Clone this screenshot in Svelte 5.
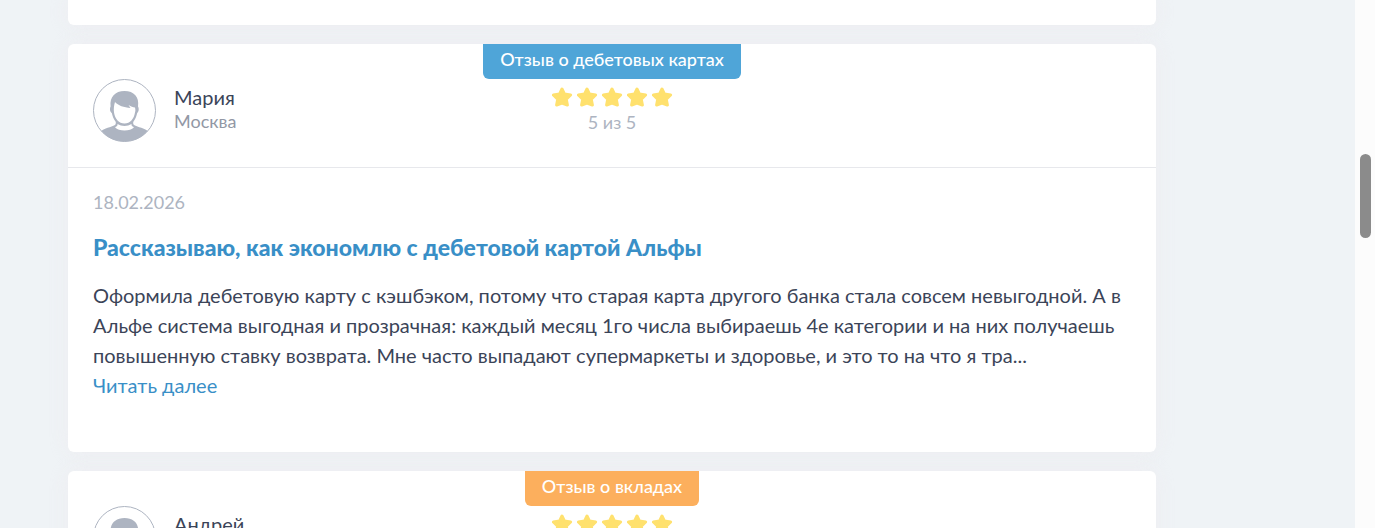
<script lang="ts">
  type Review = {
    id: number;
    kind: "debit" | "deposit";
    badge: string;
    author: string;
    city: string;
    rating: number;
    date: string;
    title: string;
    text: string;
  };

  const reviews: Review[] = [
    {
      id: 1,
      kind: "debit",
      badge: "Отзыв о дебетовых картах",
      author: "Мария",
      city: "Москва",
      rating: 5,
      date: "18.02.2026",
      title: "Рассказываю, как экономлю с дебетовой картой Альфы",
      text: "Оформила дебетовую карту с кэшбэком, потому что старая карта другого банка стала совсем невыгодной. А в Альфе система выгодная и прозрачная: каждый месяц 1го числа выбираешь 4е категории и на них получаешь повышенную ставку возврата. Мне часто выпадают супермаркеты и здоровье, и это то на что я тра...",
    },
    {
      id: 2,
      kind: "deposit",
      badge: "Отзыв о вкладах",
      author: "Андрей",
      city: "",
      rating: 5,
      date: "",
      title: "",
      text: "",
    },
  ];
</script>

<div class="page">
  <main class="reviews">
    <div class="card card-tail"></div>

    {#each reviews as review (review.id)}
      <article class="card">
        <header class="card-header">
          <div class="author">
            <svg class="avatar" viewBox="0 0 63 63" aria-hidden="true">
              <circle cx="31.5" cy="31.5" r="31" fill="#fff" stroke="#adb4c1" />
              <path
                fill="#adb4c1"
                d="M8.5 52C11 49 18 48.500 22 46C23 45.300 23 43.500 22.500 42.500C20.500 40 19.500 37 18.800 34C17 33 16.500 29.500 17.600 27.500C16.500 18 22 12 31.500 12C41 12 46.500 18 45 27.500C46.300 29.500 45.800 33 44.200 34C43.500 37 42.500 40 40.500 42.500C40 43.500 40 45.300 41 46C45 48.500 52 49 54.500 52C49 58.500 41 62.500 31.500 62.500S14 58.500 8.500 52Z"
              />
              <path
                fill="#fff"
                d="M22 23C25 26.500 31 28.500 37.500 29L35.500 26C38 27.500 40 28.500 42 28.500C42.500 30.500 42.500 32 42 33.500C41 40 37 44.500 31.500 44.500S22 40 21 33.500C20.500 30 21 26 22 23Z"
              />
              <path
                fill="#fff"
                d="M24.500 45C28.500 47.500 34.500 47.500 38.500 45C38.300 46.500 39 47.500 41 48.200C39 50.500 35.500 51.500 31.500 51.500S24 50.500 22 48.200C24 47.500 24.700 46.500 24.500 45Z"
              />
            </svg>
            <div class="author-info">
              <div class="name">{review.author}</div>
              <div class="city">{review.city}</div>
            </div>
          </div>

          <div class="summary">
            <div class="badge {review.kind}">{review.badge}</div>
            <div class="stars">
              {#each { length: review.rating } as _}
                <svg viewBox="0 0 21 20" aria-hidden="true">
                  <path
                    fill="#ffe16e"
                    stroke="#ffe16e"
                    stroke-width="3"
                    stroke-linejoin="round"
                    d="M10 2L12.400 6.900L18.600 8L14.300 12.300L15.400 18L10 16L4.600 18L5.700 12.300L1.400 8L7.600 6.900Z"
                  />
                </svg>
              {/each}
            </div>
            <div class="score">{review.rating} из 5</div>
          </div>
        </header>

        <div class="card-body">
          <time class="date">{review.date}</time>
          <h2>{review.title}</h2>
          <p>{review.text}</p>
          <a class="more" href="#review-{review.id}">Читать далее</a>
        </div>
      </article>
    {/each}
  </main>

  <div class="scrollbar" aria-hidden="true">
    <div class="thumb"></div>
  </div>
</div>

<style>
  :global(body) {
    background: #eff3f6;
    color: #3b4458;
    font-family: Lato, "Open Sans", sans-serif;
  }

  .page {
    display: flex;
    height: 100vh;
    overflow: hidden;
  }

  .reviews {
    box-sizing: border-box;
    display: flex;
    flex: 1;
    flex-direction: column;
    gap: 19px;
    padding: 0 199px 0 68px;
  }

  .card {
    background: #fff;
    border-radius: 6px;
    box-shadow: 0 0 20px rgba(238, 234, 238, 0.6);
    flex-shrink: 0;
  }

  .card-tail {
    border-radius: 0 0 6px 6px;
    height: 25px;
  }

  .card-header {
    border-bottom: 1px solid #e7e8ec;
    display: grid;
    grid-template-columns: 1fr auto 1fr;
    padding: 0 25px;
  }

  .author {
    align-items: flex-start;
    display: flex;
    gap: 18px;
    padding: 35px 0 25px;
  }

  .author-info {
    padding-top: 6px;
  }

  .avatar {
    height: 63px;
    width: 63px;
  }

  .name {
    font-size: 20px;
    line-height: 24px;
  }

  .city {
    color: #9298a5;
    font-size: 18px;
    line-height: 24px;
  }

  .summary {
    align-items: center;
    display: flex;
    flex-direction: column;
  }

  .badge {
    border-radius: 0 0 6px 6px;
    box-sizing: border-box;
    color: #fff;
    font-size: 18px;
    font-weight: 500;
    height: 35px;
    line-height: 30px;
    padding: 0 17px;
  }

  .debit {
    background: #4fa5d8;
  }

  .deposit {
    background: #fcaf5d;
  }

  .stars {
    display: flex;
    gap: 4px;
    padding: 8px 0 3px;
  }

  .stars svg {
    height: 20px;
    width: 21px;
  }

  .score {
    color: #adb4c1;
    font-size: 18px;
    line-height: 24px;
  }

  .card-body {
    padding: 22px 25px 52px;
  }

  .date {
    color: #adb4c1;
    display: block;
    font-size: 18px;
    line-height: 24px;
  }

  h2 {
    color: #398fc7;
    font-size: 23px;
    font-weight: 900;
    line-height: 30px;
    margin: 18px 0;
  }

  p {
    font-size: 20px;
    line-height: 30px;
    margin: 0;
  }

  .more {
    color: #398fc7;
    display: block;
    font-size: 20px;
    line-height: 30px;
    text-decoration: none;
  }

  .scrollbar {
    background: #fcfcfc;
    flex: 0 0 20px;
    position: relative;
  }

  .thumb {
    background: #8b8b8b;
    border-radius: 6px;
    height: 84px;
    left: 5px;
    position: absolute;
    top: 154px;
    width: 11px;
  }
</style>
